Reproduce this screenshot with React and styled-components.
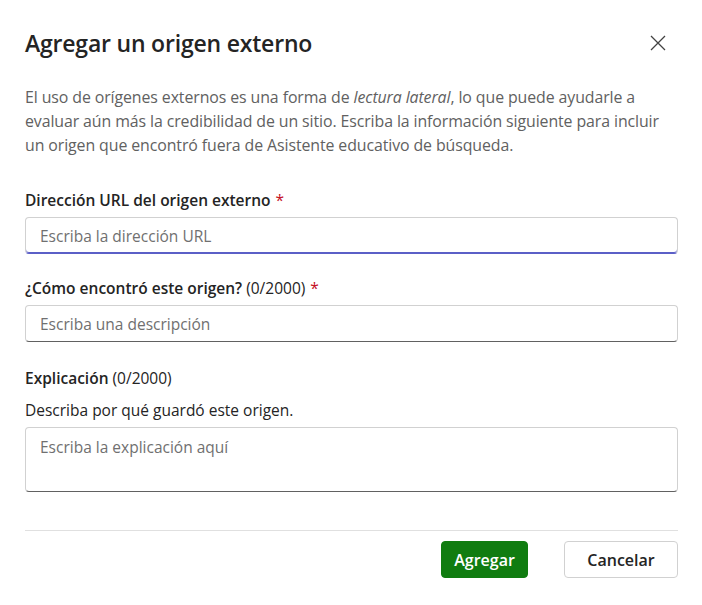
import styled, { createGlobalStyle } from 'styled-components'

const Global = createGlobalStyle`
  body {
    margin: 0;
    background: #ffffff;
    font-family: "Segoe UI", "Open Sans", "Liberation Sans", sans-serif;
  }
`

const Dialog = styled.div`
  width: 702px;
  box-sizing: border-box;
  padding: 24px 24px 0 25px;
  display: flex;
  flex-direction: column;
`

const Header = styled.div`
  display: flex;
  align-items: center;
  justify-content: space-between;
  height: 38px;
`

const Title = styled.h2`
  margin: 0;
  font-size: 23px;
  font-weight: 600;
  color: #242424;
  letter-spacing: -0.2px;
`

const CloseBtn = styled.button`
  border: none;
  background: none;
  padding: 0;
  width: 24px;
  height: 24px;
  margin-right: 8px;
  display: flex;
  align-items: center;
  justify-content: center;
  cursor: pointer;
`

const Intro = styled.p`
  margin: 23px 0 32px;
  font-size: 15.9px;
  line-height: 24px;
  color: #616161;
  white-space: nowrap;
  letter-spacing: -0.1px;
  em { font-style: italic; }
`

const Field = styled.div`
  display: flex;
  flex-direction: column;
  margin-bottom: ${p => p.$gap ?? 23}px;
`

const Label = styled.label`
  font-size: 15.5px;
  line-height: 22px;
  font-weight: 600;
  color: #242424;
  margin-bottom: ${p => p.$gap ?? 6}px;
  span.count { font-weight: 400; }
  span.req { color: #c50f1f; font-weight: 400; margin-left: 5px; }
`

const Hint = styled.div`
  font-size: 15.5px;
  line-height: 22px;
  color: #242424;
  margin-bottom: 6px;
`

const Input = styled.input`
  box-sizing: border-box;
  width: 100%;
  height: 37px;
  padding: 0 14px;
  border: 1px solid #d1d1d1;
  border-bottom-color: ${p => (p.$focused ? '#5b5fc7' : '#616161')};
  box-shadow: ${p => (p.$focused ? 'inset 0 -1px 0 #5b5fc7' : 'none')};
  border-radius: 4px;
  font-family: inherit;
  font-size: 15.5px;
  color: #242424;
  outline: none;
  &::placeholder { color: #707070; }
`

const TextArea = styled.textarea`
  box-sizing: border-box;
  width: 100%;
  height: 65px;
  padding: 7px 14px;
  border: 1px solid #d1d1d1;
  border-bottom-color: #616161;
  border-radius: 4px;
  font-family: inherit;
  font-size: 15.5px;
  line-height: 24px;
  resize: none;
  outline: none;
  &::placeholder { color: #707070; }
`

const Divider = styled.hr`
  margin: 38px 0 0;
  border: none;
  border-top: 1px solid #e0e0e0;
`

const Footer = styled.div`
  display: flex;
  justify-content: flex-end;
  gap: 36px;
  padding-top: 10px;
`

const Button = styled.button`
  box-sizing: border-box;
  height: 37px;
  padding: 0;
  width: ${p => p.$w}px;
  border-radius: 4px;
  font-family: inherit;
  font-size: 16px;
  font-weight: 600;
  cursor: pointer;
  border: 1px solid ${p => (p.$primary ? '#107c10' : '#d1d1d1')};
  background: ${p => (p.$primary ? '#107c10' : '#ffffff')};
  color: ${p => (p.$primary ? '#ffffff' : '#242424')};
`

const CloseIcon = () => (
  <svg width="16" height="16" viewBox="0 0 16 16">
    <path d="M1 1 L15 15 M15 1 L1 15" stroke="#424242" strokeWidth="1.3" fill="none" />
  </svg>
)

export default function App() {
  return (
    <>
      <Global />
      <Dialog>
        <Header>
          <Title>Agregar un origen externo</Title>
          <CloseBtn aria-label="Cerrar"><CloseIcon /></CloseBtn>
        </Header>
        <Intro>
          El uso de orígenes externos es una forma de <em>lectura lateral</em>, lo que puede ayudarle a<br />
          evaluar aún más la credibilidad de un sitio. Escriba la información siguiente para incluir<br />
          un origen que encontró fuera de Asistente educativo de búsqueda.
        </Intro>
        <Field>
          <Label>Dirección URL del origen externo<span className="req">*</span></Label>
          <Input $focused placeholder="Escriba la dirección URL" />
        </Field>
        <Field $gap={25}>
          <Label>¿Cómo encontró este origen? <span className="count">(0/2000)</span><span className="req">*</span></Label>
          <Input placeholder="Escriba una descripción" />
        </Field>
        <Field $gap={0}>
          <Label $gap={10}>Explicación <span className="count">(0/2000)</span></Label>
          <Hint>Describa por qué guardó este origen.</Hint>
          <TextArea placeholder="Escriba la explicación aquí" />
        </Field>
        <Divider />
        <Footer>
          <Button $primary $w={87}>Agregar</Button>
          <Button $w={114}>Cancelar</Button>
        </Footer>
      </Dialog>
    </>
  )
}
